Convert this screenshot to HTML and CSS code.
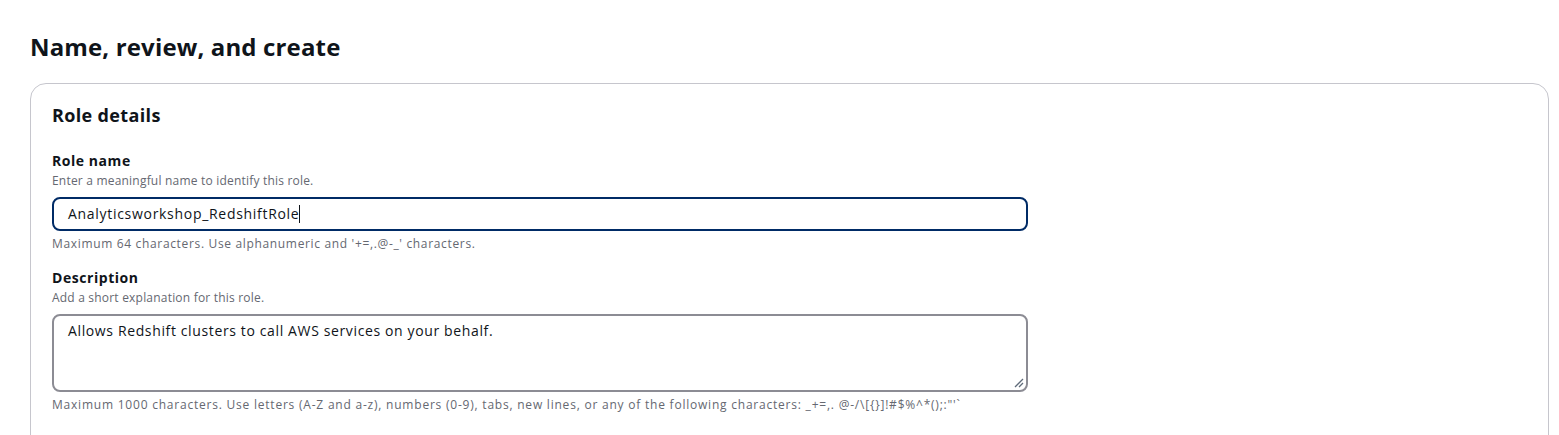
FILE: index.html
```html
<!DOCTYPE html>
<html lang="en">
<head>
<meta charset="utf-8">
<title>Name, review, and create</title>
<link rel="stylesheet" href="styles.css">
</head>
<body>
<main class="page">
  <h1 class="page-title">Name, review, and create</h1>
  <section class="container">
    <h2 class="container-title">Role details</h2>
    <div class="field">
      <label class="field-label" for="role-name">Role name</label>
      <div class="field-desc">Enter a meaningful name to identify this role.</div>
      <div class="input input-focused"><span class="input-value">Analyticsworkshop_RedshiftRole</span><span class="caret"></span></div>
      <div class="field-constraint">Maximum 64 characters. Use alphanumeric and '+=,.@-_' characters.</div>
    </div>
    <div class="field field-second">
      <label class="field-label" for="role-desc">Description</label>
      <div class="field-desc">Add a short explanation for this role.</div>
      <div class="textarea">
        <span class="input-value textarea-value">Allows Redshift clusters to call AWS services on your behalf.</span>
        <svg class="resize" width="10" height="10" viewBox="0 0 10 10"><path d="M9 1 L1 9 M9 5 L5 9" stroke="#5f6b7a" stroke-width="1.3" fill="none"/></svg>
      </div>
      <div class="field-constraint constraint-long">Maximum 1000 characters. Use letters (A-Z and a-z), numbers (0-9), tabs, new lines, or any of the following characters: _+=,. @-/\[{}]!#$%^*();:"'`</div>
    </div>
  </section>
</main>
</body>
</html>
```

FILE: styles.css
```css
* { box-sizing: border-box; }
html, body { margin: 0; padding: 0; background: #ffffff; }
body {
  font-family: "Open Sans", "Noto Sans", "Liberation Sans", sans-serif;
  color: #0f141a;
}
.page {
  padding: 32px 10px 0 30px;
}
.page-title {
  margin: 0 0 21px 0;
  font-size: 24px;
  line-height: 30px;
  font-weight: 700;
  letter-spacing: 0.15px;
  color: #0f141a;
}
.container {
  border: 1px solid #c6c6cd;
  border-radius: 16px;
  padding: 20px 20px 40px 21px;
  width: 1519px;
}
.container-title {
  margin: 0;
  font-size: 18px;
  line-height: 22px;
  font-weight: 700;
  letter-spacing: 0.35px;
}
.field {
  margin-top: 26px;
  width: 976px;
}
.field-second { margin-top: 17px; }
.field-label {
  display: block;
  font-size: 14px;
  line-height: 18px;
  font-weight: 700;
  letter-spacing: 0.55px;
}
.field-desc, .field-constraint {
  font-size: 12px;
  line-height: 16px;
  color: #656871;
  margin-top: 3px;
  letter-spacing: 0.2px;
}
.field-constraint {
  margin-top: 5px;
  white-space: nowrap;
  letter-spacing: 0.66px;
}
.constraint-long { letter-spacing: 0.78px; }
.input, .textarea {
  margin-top: 8px;
  border: 2px solid #8c8c94;
  border-radius: 8px;
  padding: 4px 14px;
  font-size: 14px;
  line-height: 22px;
  color: #0f141a;
}
.input-value { letter-spacing: 0.7px; }
.textarea-value { letter-spacing: 0.63px; }
.input {
  height: 34px;
  display: flex;
  align-items: center;
}
.input-focused { border-color: #002b66; }
.caret {
  display: inline-block;
  width: 1px;
  height: 18px;
  background: #0f141a;
}
.textarea {
  position: relative;
  height: 78px;
}
.resize {
  position: absolute;
  right: 2px;
  bottom: 2px;
}
```
